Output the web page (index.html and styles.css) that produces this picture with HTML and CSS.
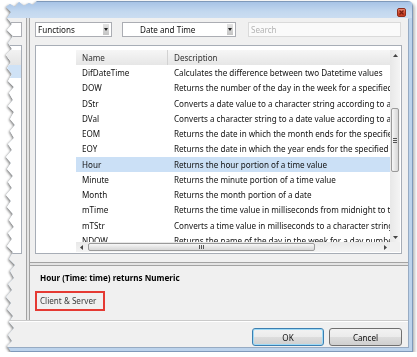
FILE: index.html
```html
<!DOCTYPE html>
<html lang="en">

<head>
  <meta charset="UTF-8" />
  <meta name="viewport" content="width=device-width, initial-scale=1.0" />
  <title>Functions - Date and Time</title>
  <link rel="stylesheet" href="styles.css">
</head>

<body>
  <div class="stage">
    <div class="tear">
      <div class="window">
        <div class="titlebar">
          <span class="close">
            <svg width="7" height="7" viewBox="0 0 7 7"><path d="M1.5 1.5l4 4M5.5 1.5l-4 4" stroke="#7a1d10" stroke-width="1.3" /></svg>
          </span>
        </div>

        <div class="client">
          <div class="workarea">
            <!-- left pane, mostly torn off -->
            <div class="leftpane">
              <div class="lp-input"></div>
              <div class="lp-list">
                <div class="lp-head"></div>
                <div class="lp-sel"></div>
              </div>
            </div>

            <div class="vsplit"></div>

            <div class="mainpane">
              <div class="toolbar">
                <div class="combo combo-kind">
                  <span class="combo-text">Functions</span>
                  <span class="combo-btn"><svg width="4" height="3" viewBox="0 0 4 3"><path d="M0 0h4L2 3z" fill="#222" /></svg></span>
                </div>
                <div class="combo combo-group">
                  <span class="combo-text">Date and Time</span>
                  <span class="combo-btn"><svg width="4" height="3" viewBox="0 0 4 3"><path d="M0 0h4L2 3z" fill="#222" /></svg></span>
                </div>
                <div class="search">Search</div>
              </div>

              <div class="grid">
                <div class="grid-blank"></div>
                <div class="grid-view">
                  <div class="grid-head">
                    <div class="cell name">Name</div>
                    <div class="cell desc">Description</div>
                  </div>
                  <div class="row"><div class="cell name">DifDateTime</div><div class="cell desc">Calculates the difference between two Datetime values</div></div>
                  <div class="row"><div class="cell name">DOW</div><div class="cell desc">Returns the number of the day in the week for a specified date</div></div>
                  <div class="row"><div class="cell name">DStr</div><div class="cell desc">Converts a date value to a character string according to a format</div></div>
                  <div class="row"><div class="cell name">DVal</div><div class="cell desc">Converts a character string to a date value according to a format</div></div>
                  <div class="row"><div class="cell name">EOM</div><div class="cell desc">Returns the date in which the month ends for the specified date</div></div>
                  <div class="row"><div class="cell name">EOY</div><div class="cell desc">Returns the date in which the year ends for the specified date</div></div>
                  <div class="row selected"><div class="cell name">Hour</div><div class="cell desc">Returns the hour portion of a time value</div></div>
                  <div class="row"><div class="cell name">Minute</div><div class="cell desc">Returns the minute portion of a time value</div></div>
                  <div class="row"><div class="cell name">Month</div><div class="cell desc">Returns the month portion of a date</div></div>
                  <div class="row"><div class="cell name">mTime</div><div class="cell desc">Returns the time value in milliseconds from midnight to the time</div></div>
                  <div class="row"><div class="cell name">mTStr</div><div class="cell desc">Converts a time value in milliseconds to a character string</div></div>
                  <div class="row"><div class="cell name">NDOW</div><div class="cell desc">Returns the name of the day in the week for a day number</div></div>
                </div>

                <div class="vscroll">
                  <span class="sb-arrow"><svg width="5" height="3" viewBox="0 0 5 3"><path d="M0 3h5L2.5 0z" fill="#444" /></svg></span>
                  <div class="vtrack">
                    <div class="vthumb"><span class="grip-h"></span></div>
                  </div>
                  <span class="sb-arrow"><svg width="5" height="3" viewBox="0 0 5 3"><path d="M0 0h5L2.5 3z" fill="#444" /></svg></span>
                </div>

                <div class="hscroll">
                  <span class="sb-arrow"><svg width="3" height="5" viewBox="0 0 3 5"><path d="M3 0v5L0 2.5z" fill="#444" /></svg></span>
                  <div class="htrack">
                    <div class="hthumb"><span class="grip-v"></span></div>
                  </div>
                  <span class="sb-arrow"><svg width="3" height="5" viewBox="0 0 3 5"><path d="M0 0v5L3 2.5z" fill="#444" /></svg></span>
                </div>
                <div class="corner"></div>
              </div>

              <div class="hsplit"></div>

              <div class="details">
                <div class="signature">Hour (Time: time) returns Numeric</div>
                <div class="scope">Client &amp; Server</div>
              </div>
            </div>
          </div>

          <div class="footer">
            <button class="btn btn-default">OK</button>
            <button class="btn btn-cancel">Cancel</button>
          </div>
        </div>
      </div>
    </div>
  </div>
</body>

</html>
```

FILE: styles.css
```css
body {
  margin: 0;
  background: #fff;
  font-family: "Noto Sans", "Open Sans", sans-serif;
  font-size: 8.1px;
  color: #111;
}

.stage {
  padding: 1px 0 0 2px;
}

/* torn screenshot edge */
.tear {
  width: 411px;
  filter: drop-shadow(-1px 1px 1px rgba(0, 0, 0, 0.4)) drop-shadow(2px 2px 1.5px rgba(0, 0, 0, 0.25));
}

.window {
  box-sizing: border-box;
  width: 411px;
  height: 351px;
  display: flex;
  flex-direction: column;
  background: #bcd3ec;
  border: 1px solid #7f99ba;
  border-left: none;
  clip-path: polygon(35px 0, 405px 0, 408px 0.5px, 410px 2px, 411px 5px, 411px 351px,
      9px 351px, 5px 345px, 10px 340px, 6px 334px, 12px 327px, 7px 321px, 11px 315px, 5px 308px,
      9px 302px, 4px 296px, 10px 289px, 6px 283px, 12px 277px, 8px 270px, 13px 264px, 7px 258px,
      11px 251px, 5px 245px, 10px 238px, 6px 232px, 12px 226px, 7px 219px, 11px 213px, 5px 206px,
      9px 200px, 4px 194px, 10px 187px, 6px 181px, 11px 175px, 5px 168px, 9px 162px, 4px 156px,
      10px 149px, 6px 143px, 12px 137px, 8px 130px, 13px 124px, 8px 118px, 12px 111px, 6px 105px,
      11px 99px, 7px 92px, 12px 86px, 6px 80px, 10px 73px, 5px 67px, 9px 61px, 4px 54px,
      10px 48px, 6px 42px, 11px 35px, 5px 29px, 10px 23px, 5px 17px, 9px 11px, 4px 6px,
      8px 3px, 13px 6px, 17px 1px, 22px 5px, 27px 2px, 31px 4px);
}

.titlebar {
  height: 16px;
  display: flex;
  justify-content: flex-end;
  align-items: flex-start;
  padding: 6px 6px 0 0;
  box-sizing: border-box;
  background: linear-gradient(#a7c3e6, #c3d8ef 60%, #cbddf1);
}

.close {
  width: 9px;
  height: 9px;
  box-sizing: border-box;
  border: 1px solid #8e2e1c;
  border-radius: 2px;
  background: linear-gradient(#eb8f78, #d04a2e 55%, #c23b22);
  display: flex;
  align-items: center;
  justify-content: center;
}

.close svg {
  display: block;
}

.client {
  height: 329px;
  margin: 0 4px 4px 0;
  background: #f0f0f0;
  box-shadow: 1px 1px 0 #97abc3;
  display: flex;
  flex-direction: column;
}

.workarea {
  height: 302px;
  display: flex;
}

/* ========= left pane ========= */

.leftpane {
  width: 24px;
  padding-right: 4px;
  box-sizing: border-box;
}

.lp-input {
  margin-top: 4px;
  height: 15px;
  box-sizing: border-box;
  background: #fff;
  border: 1px solid #abadb3;
}

.lp-list {
  margin-top: 8px;
  height: 209px;
  box-sizing: border-box;
  background: #fff;
  border: 1px solid #a7adb6;
  padding-top: 4px;
}

.lp-head {
  height: 15px;
  background: linear-gradient(#f2f2f2, #e4e4e4);
}

.lp-sel {
  height: 13px;
  background: #cfe2f6;
}

.vsplit {
  width: 4px;
  box-sizing: border-box;
  background: #e4e4e4;
  border-left: 1px solid #a3a3a3;
  border-right: 1px solid #a3a3a3;
}

/* ========= main pane ========= */

.mainpane {
  flex: 1;
  display: flex;
  flex-direction: column;
}

.toolbar {
  display: flex;
  gap: 10px;
  height: 15px;
  margin: 4px 6px 0 5px;
}

.combo {
  box-sizing: border-box;
  height: 15px;
  display: flex;
  align-items: center;
  background: #fff;
  border: 1px solid #abadb3;
}

.combo-kind {
  width: 77px;
}

.combo-group {
  width: 114px;
}

.combo-text {
  flex: 1;
  padding-left: 2px;
  line-height: 13px;
  white-space: nowrap;
}

.combo-group .combo-text {
  padding-left: 17px;
}

.combo-btn {
  width: 6px;
  height: 11px;
  margin-right: 2px;
  background: linear-gradient(#e4e4e4, #c4c4c4);
  display: flex;
  align-items: center;
  justify-content: center;
}

.combo-btn svg {
  display: block;
}

.search {
  box-sizing: border-box;
  margin-left: 2px;
  width: 153px;
  height: 15px;
  line-height: 13px;
  padding-left: 2px;
  background: #fafafa;
  border: 1px solid #dadada;
  color: #b4b4b4;
}

.grid {
  box-sizing: border-box;
  height: 209px;
  margin: 8px 6px 0 5px;
  background: #fff;
  border: 1px solid #a7adb6;
  padding: 4px 1px 1px 0;
  display: grid;
  grid-template-columns: 40px 1fr 10px;
  grid-template-rows: 1fr 10px;
}

.grid-blank {
  grid-row: 1 / 3;
}

.grid-view {
  overflow: hidden;
}

.grid-head {
  height: 15px;
  display: flex;
  line-height: 15px;
  color: #333;
  background: linear-gradient(#f6f6f6, #e6e6e6);
}

.grid-head .name {
  border-right: 1px solid #d2d2d2;
}

.row {
  height: 15.25px;
  line-height: 15.25px;
  display: flex;
}

.row.selected {
  background: #cbe0f6;
}

.cell {
  box-sizing: border-box;
  white-space: nowrap;
  padding-left: 6px;
}

.cell.name {
  width: 92px;
}

.cell.desc {
  flex: 1;
  overflow: hidden;
}

.sb-arrow {
  display: flex;
  align-items: center;
  justify-content: center;
  flex: none;
}

.sb-arrow svg {
  display: block;
}

.vscroll {
  display: flex;
  flex-direction: column;
  background: linear-gradient(90deg, #e8e8e8, #f4f4f4);
}

.vscroll .sb-arrow {
  height: 10px;
}

.vtrack {
  flex: 1;
  padding: 48px 1px 0;
}

.vthumb {
  box-sizing: border-box;
  height: 64px;
  border: 1px solid #9a9a9a;
  border-radius: 2px;
  background: linear-gradient(90deg, #f7f7f7, #e6e6e6 50%, #d7d7d7);
  display: flex;
  align-items: center;
  justify-content: center;
}

.grip-h {
  width: 4px;
  height: 5px;
  background: repeating-linear-gradient(#555 0 1px, transparent 1px 2px);
}

.hscroll {
  display: flex;
  background: linear-gradient(#e8e8e8, #f4f4f4);
}

.hscroll .sb-arrow {
  width: 10px;
}

.htrack {
  flex: 1;
  padding: 1px 0 1px 2px;
}

.hthumb {
  box-sizing: border-box;
  width: 227px;
  height: 8px;
  border: 1px solid #9a9a9a;
  border-radius: 2px;
  background: linear-gradient(#f7f7f7, #e6e6e6 50%, #d7d7d7);
  display: flex;
  align-items: center;
  justify-content: center;
}

.grip-v {
  width: 5px;
  height: 4px;
  background: repeating-linear-gradient(90deg, #555 0 1px, transparent 1px 2px);
}

.corner {
  background: #f0f0f0;
}

.hsplit {
  margin-top: 8px;
  height: 4px;
  box-sizing: border-box;
  background: #e4e4e4;
  border-top: 1px solid #a3a3a3;
  border-bottom: 1px solid #a3a3a3;
}

.details {
  flex: 1;
  padding: 6px 0 0 5px;
}

.signature {
  font-weight: bold;
  line-height: 12px;
  padding-left: 5px;
  color: #000;
}

.scope {
  box-sizing: border-box;
  margin-top: 7px;
  width: 70px;
  height: 20px;
  padding-left: 3px;
  line-height: 16px;
  border: 2px solid #e53a33;
  color: #3c3c3c;
  white-space: nowrap;
}

/* ========= footer ========= */

.footer {
  flex: 1;
  display: flex;
  justify-content: flex-end;
  gap: 5px;
  padding: 7px 6px 0 0;
  border-top: 1px solid #cacaca;
  box-shadow: inset 0 1px 0 #fff;
}

.btn {
  box-sizing: border-box;
  width: 72px;
  height: 18px;
  padding: 0;
  font-family: inherit;
  font-size: 8.1px;
  color: #111;
  border: 1px solid #707070;
  border-radius: 3px;
  background: linear-gradient(#f2f2f2, #ebebeb 50%, #dddddd 51%, #cfcfcf);
}

.btn-default {
  border-color: #3c7fb1;
  box-shadow: inset 0 0 0 1px #9fdaf6;
}

.btn-cancel {
  width: 73px;
}
```
